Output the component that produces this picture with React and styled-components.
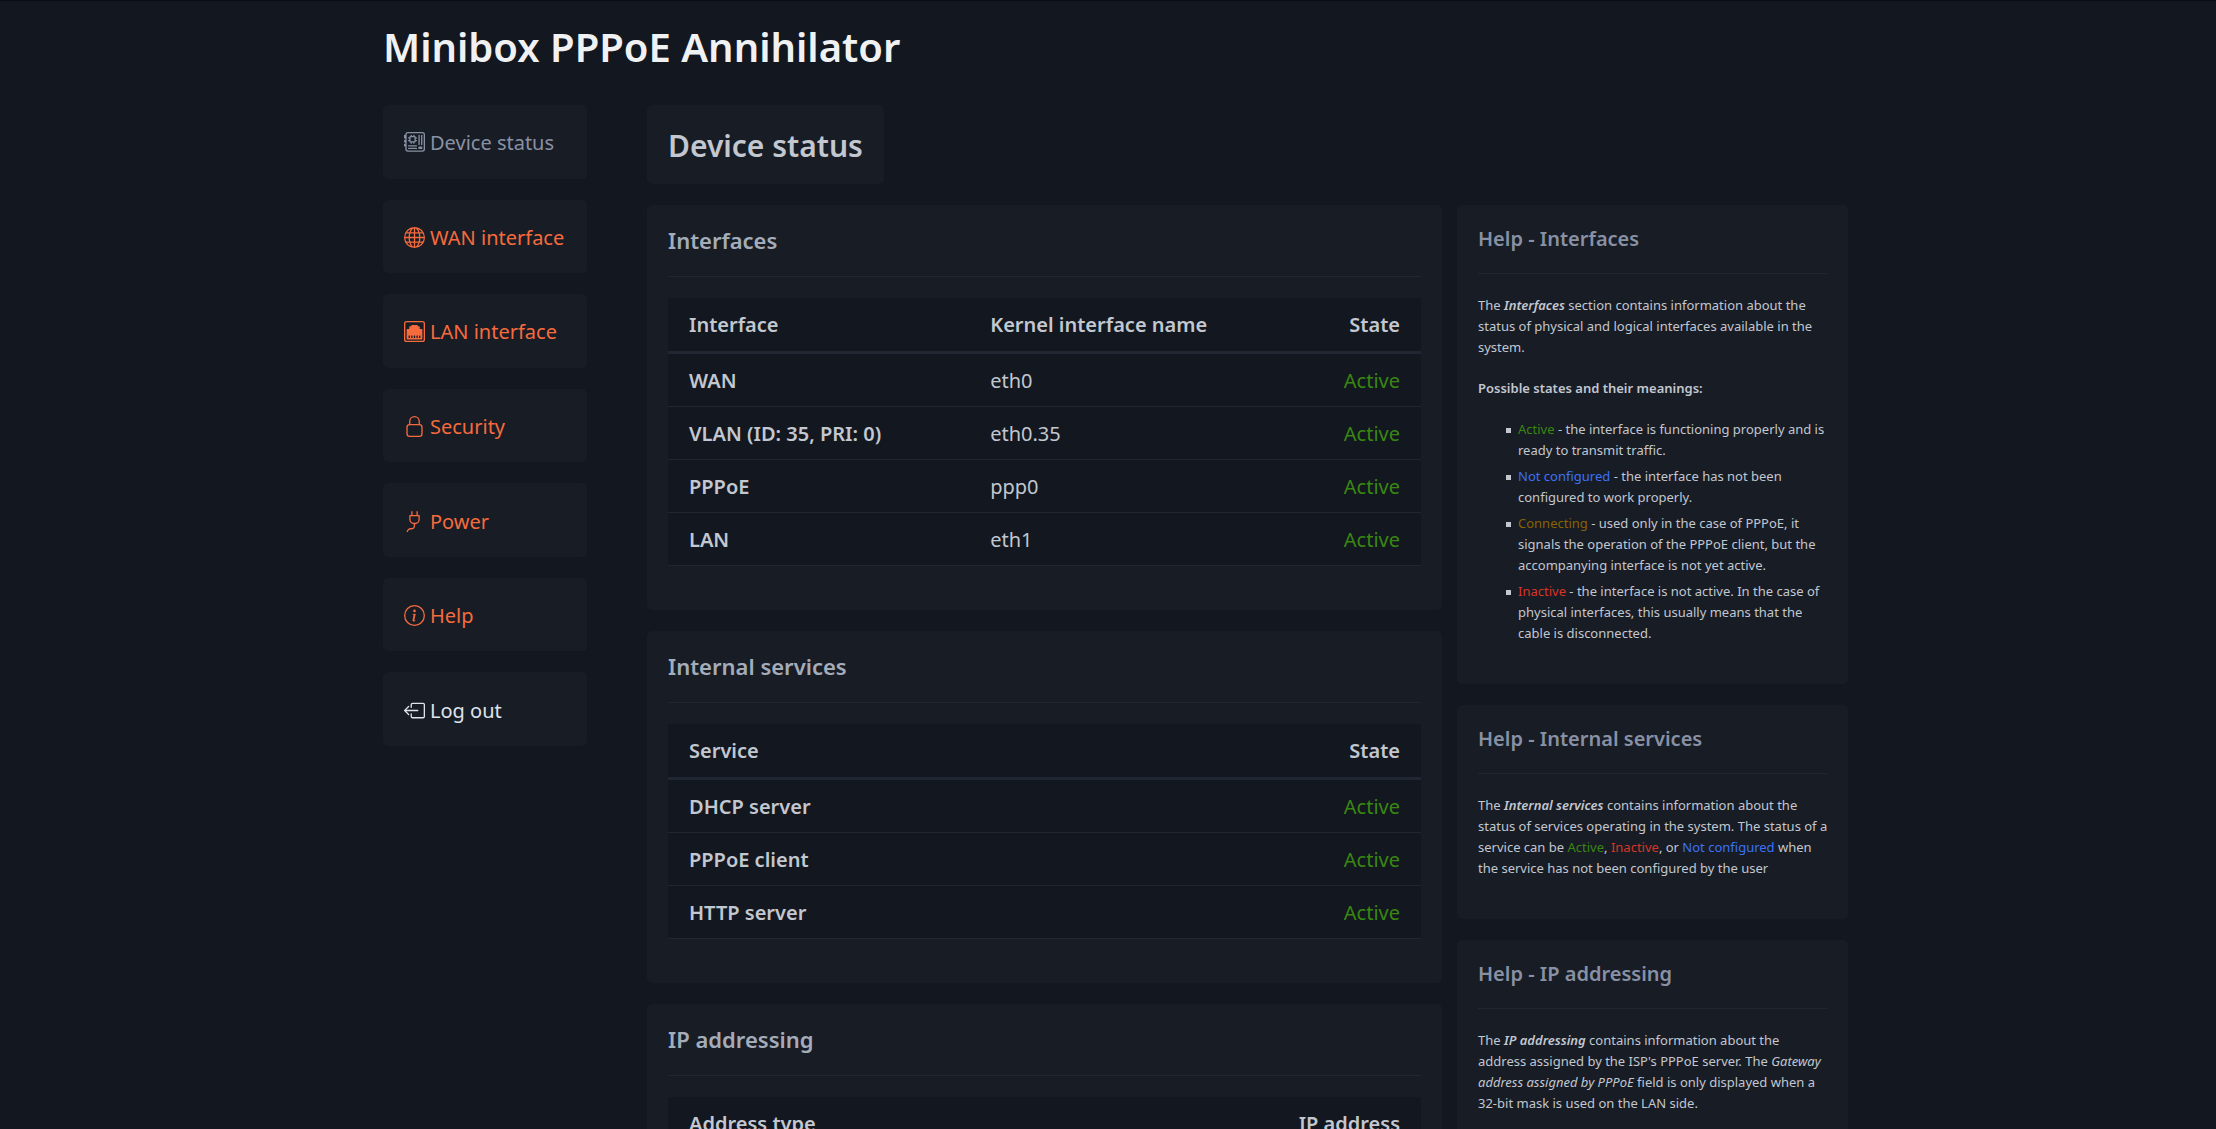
import React from "react";
import styled, { createGlobalStyle } from "styled-components";
import {
  BsMotherboard,
  BsGlobe,
  BsEthernet,
  BsPlug,
  BsInfoCircle,
  BsBoxArrowLeft,
} from "react-icons/bs";

const color = {
  page: "#13171f",
  card: "#181c25",
  line: "#202632",
  text: "#c2c7d0",
  title: "#f0f1f3",
  section: "#a4acba",
  muted: "#8891a4",
  link: "#f56b3d",
  contrast: "#dfe3eb",
};

const stateColor = {
  active: "#398712",
  idle: "#3c71f7",
  pending: "#876400",
  inactive: "#d93526",
};

const GlobalStyle = createGlobalStyle`
  *, *::before, *::after { box-sizing: border-box; }
  body {
    margin: 0;
    border-top: 1px solid #0b0d12;
    background: ${color.page};
    color: ${color.text};
    font: 400 20px/31px "Noto Sans", "Open Sans", sans-serif;
  }
  h1, h2, h3, p, ul { margin: 0; }
`;

const Container = styled.div`
  max-width: 1450px;
  margin: 0 auto;
`;

const PageHeader = styled.header`
  padding: 22px 0 35px;
`;

const SiteTitle = styled.h1`
  color: ${color.title};
  font-size: 40px;
  line-height: 47px;
  font-weight: 600;
`;

const Layout = styled.div`
  display: grid;
  grid-template-columns: minmax(204px, auto) minmax(0, 1fr);
  gap: 60px;
  margin-right: -15px;
  align-items: start;
`;

const Stack = styled.div`
  display: flex;
  flex-direction: column;
  gap: 21px;
`;

const NavList = styled.ul`
  display: grid;
  grid-auto-rows: 1fr;
  gap: 21px;
  min-height: 641px;
  padding: 0;
  list-style: none;
`;

const NavLink = styled.a`
  display: flex;
  align-items: center;
  gap: 5px;
  height: 100%;
  padding: 22px 21px 20px;
  border-radius: 5px;
  background: ${color.card};
  color: ${(p) => color[p.$tone]};
  text-decoration: none;
  white-space: nowrap;
`;

const Card = styled.section`
  padding: 21px;
  border-radius: 5px;
  background: ${color.card};
`;

const PageTitle = styled.h2`
  align-self: flex-start;
  padding: 22px 21px 20px;
  border-radius: 5px;
  background: ${color.card};
  font-size: 30px;
  line-height: 37px;
  font-weight: 600;
`;

const Panels = styled.div`
  display: grid;
  grid-template-columns: minmax(0, 795fr) minmax(0, 391fr);
  gap: 15px;
  align-items: start;
`;

const SectionTitle = styled.h3`
  padding-bottom: 21px;
  margin-bottom: 21px;
  border-bottom: 1px solid ${color.line};
  color: ${color.section};
  font-size: 22px;
  line-height: 29px;
  font-weight: 600;
`;

const HelpTitle = styled(SectionTitle)`
  color: ${color.muted};
  font-size: 20px;
  line-height: 26px;
`;

const Table = styled.table`
  width: 100%;
  margin-bottom: 23px;
  border-collapse: separate;
  border-spacing: 0;
  background: ${color.page};
`;

const Cell = styled.td`
  padding: 11px 21px 10px;
  border-bottom: 1px solid ${color.line};
  text-align: left;
  font-weight: 400;

  &:first-child { width: 40%; }
  &:last-child { text-align: right; }
`;

const RowHead = styled(Cell)`
  font-weight: 600;
`;

const ColumnHead = styled(Cell)`
  padding: 11px 21px;
  border-bottom-width: 3px;
  font-weight: 600;
`;

const State = styled.span`
  color: ${(p) => stateColor[p.$kind]};
`;

const HelpBody = styled.div`
  display: flex;
  flex-direction: column;
  gap: 20px;
  margin: 0 -2px 19px 0;
  font-size: 13px;
  line-height: 21px;

  strong { font-weight: 600; }
`;

const StateList = styled.ul`
  display: flex;
  flex-direction: column;
  gap: 5px;
  padding-left: 40px;
  list-style: none;
`;

const StateItem = styled.li`
  position: relative;

  &::before {
    content: "";
    position: absolute;
    top: 9px;
    left: -12px;
    width: 5px;
    height: 5px;
    background: currentColor;
  }
`;

function LockIcon({ size, ...rest }) {
  return (
    <svg width={size} height={size} viewBox="0 0 16 16" fill="none" stroke="currentColor" {...rest}>
      <rect x="2.3" y="6.6" width="11.4" height="8.9" rx="2" />
      <path d="M4.4 6.6V4.1a3.6 3.6 0 0 1 7.2 0v2.5" />
    </svg>
  );
}

const navItems = [
  { label: "Device status", icon: BsMotherboard, tone: "muted", current: true },
  { label: "WAN interface", icon: BsGlobe, tone: "link" },
  { label: "LAN interface", icon: BsEthernet, tone: "link" },
  { label: "Security", icon: LockIcon, tone: "link" },
  { label: "Power", icon: BsPlug, tone: "link" },
  { label: "Help", icon: BsInfoCircle, tone: "link" },
  { label: "Log out", icon: BsBoxArrowLeft, tone: "contrast" },
];

const interfaces = [
  ["WAN", "eth0"],
  ["VLAN (ID: 35, PRI: 0)", "eth0.35"],
  ["PPPoE", "ppp0"],
  ["LAN", "eth1"],
];

const services = [["DHCP server"], ["PPPoE client"], ["HTTP server"]];

function DataTable({ columns, rows = [] }) {
  return (
    <Table>
      <thead>
        <tr>
          {columns.map((c) => (
            <ColumnHead as="th" scope="col" key={c}>{c}</ColumnHead>
          ))}
        </tr>
      </thead>
      <tbody>
        {rows.map(([name, ...rest]) => (
          <tr key={name}>
            <RowHead as="th" scope="row">{name}</RowHead>
            {rest.map((v) => (
              <Cell key={v}>{v}</Cell>
            ))}
            <Cell><State $kind="active">Active</State></Cell>
          </tr>
        ))}
      </tbody>
    </Table>
  );
}

export default function App() {
  return (
    <>
      <GlobalStyle />
      <Container>
        <PageHeader>
          <SiteTitle>Minibox PPPoE Annihilator</SiteTitle>
        </PageHeader>
        <Layout>
          <nav>
            <NavList>
              {navItems.map(({ label, icon: Icon, tone, current }) => (
                <li key={label}>
                  <NavLink href="#" $tone={tone} aria-current={current ? "page" : undefined}>
                    <Icon size={21} aria-hidden="true" />
                    {label}
                  </NavLink>
                </li>
              ))}
            </NavList>
          </nav>
          <Stack as="main">
            <PageTitle>Device status</PageTitle>
            <Panels>
              <Stack>
                <Card>
                  <SectionTitle>Interfaces</SectionTitle>
                  <DataTable columns={["Interface", "Kernel interface name", "State"]} rows={interfaces} />
                </Card>
                <Card>
                  <SectionTitle>Internal services</SectionTitle>
                  <DataTable columns={["Service", "State"]} rows={services} />
                </Card>
                <Card>
                  <SectionTitle>IP addressing</SectionTitle>
                  <DataTable columns={["Address type", "IP address"]} />
                </Card>
              </Stack>
              <Stack as="aside">
                <Card>
                  <HelpTitle>Help - Interfaces</HelpTitle>
                  <HelpBody>
                    <p>
                      The <strong><em>Interfaces</em></strong> section contains information about the
                      status of physical and logical interfaces available in the system.
                    </p>
                    <p><strong>Possible states and their meanings:</strong></p>
                    <StateList>
                      <StateItem>
                        <State $kind="active">Active</State> - the interface is functioning properly
                        and is ready to transmit traffic.
                      </StateItem>
                      <StateItem>
                        <State $kind="idle">Not configured</State> - the interface has not been
                        configured to work properly.
                      </StateItem>
                      <StateItem>
                        <State $kind="pending">Connecting</State> - used only in the case of PPPoE, it
                        signals the operation of the PPPoE client, but the accompanying interface is
                        not yet active.
                      </StateItem>
                      <StateItem>
                        <State $kind="inactive">Inactive</State> - the interface is not active. In the
                        case of physical interfaces, this usually means that the cable is disconnected.
                      </StateItem>
                    </StateList>
                  </HelpBody>
                </Card>
                <Card>
                  <HelpTitle>Help - Internal services</HelpTitle>
                  <HelpBody>
                    <p>
                      The <strong><em>Internal services</em></strong> contains information about the
                      status of services operating in the system. The status of a service can
                      be <State $kind="active">Active</State>, <State $kind="inactive">Inactive</State>,
                      or <State $kind="idle">Not configured</State> when the service has not been
                      configured by the user
                    </p>
                  </HelpBody>
                </Card>
                <Card>
                  <HelpTitle>Help - IP addressing</HelpTitle>
                  <HelpBody>
                    <p>
                      The <strong><em>IP addressing</em></strong> contains information about the
                      address assigned by the ISP's PPPoE server. The <em>Gateway address assigned by
                      PPPoE</em> field is only displayed when a 32-bit mask is used on the LAN side.
                    </p>
                  </HelpBody>
                </Card>
              </Stack>
            </Panels>
          </Stack>
        </Layout>
      </Container>
    </>
  );
}
